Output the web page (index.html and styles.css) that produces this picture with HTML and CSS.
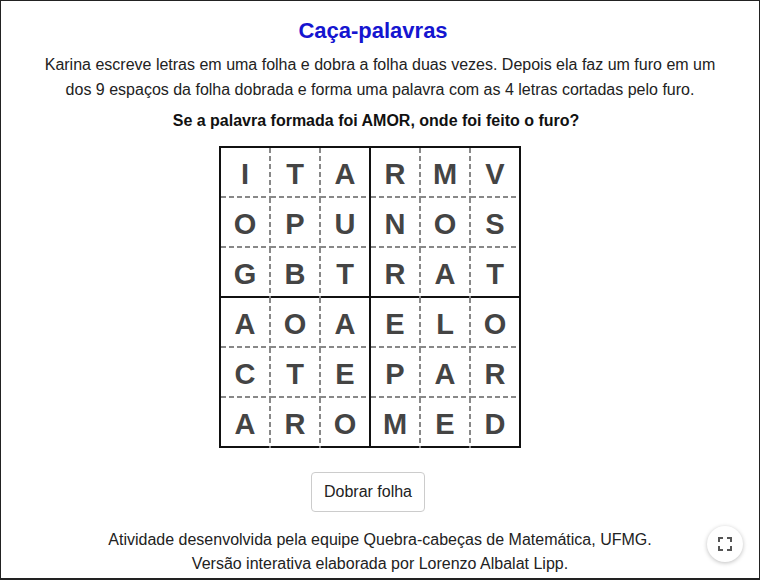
FILE: index.html
```html
<!DOCTYPE html>
<html lang="pt-BR">
<head>
<meta charset="utf-8">
<title>Caça-palavras</title>
<link rel="stylesheet" href="styles.css">
</head>
<body>
<div class="frame">
  <h1 class="title">Caça-palavras</h1>
  <p class="intro">Karina escreve letras em uma folha e dobra a folha duas vezes. Depois ela faz um furo em um<br>dos 9 espaços da folha dobrada e forma uma palavra com as 4 letras cortadas pelo furo.</p>
  <p class="question">Se a palavra formada foi AMOR, onde foi feito o furo?</p>
  <div class="grid">
    <div class="cell">I</div><div class="cell">T</div><div class="cell">A</div><div class="cell">R</div><div class="cell">M</div><div class="cell">V</div>
    <div class="cell">O</div><div class="cell">P</div><div class="cell">U</div><div class="cell">N</div><div class="cell">O</div><div class="cell">S</div>
    <div class="cell">G</div><div class="cell">B</div><div class="cell">T</div><div class="cell">R</div><div class="cell">A</div><div class="cell">T</div>
    <div class="cell">A</div><div class="cell">O</div><div class="cell">A</div><div class="cell">E</div><div class="cell">L</div><div class="cell">O</div>
    <div class="cell">C</div><div class="cell">T</div><div class="cell">E</div><div class="cell">P</div><div class="cell">A</div><div class="cell">R</div>
    <div class="cell">A</div><div class="cell">R</div><div class="cell">O</div><div class="cell">M</div><div class="cell">E</div><div class="cell">D</div>
  </div>
  <button class="fold-btn" type="button">Dobrar folha</button>
  <p class="credits">Atividade desenvolvida pela equipe Quebra-cabeças de Matemática, UFMG.<br>Versão interativa elaborada por Lorenzo Albalat Lipp.</p>
  <button class="fullscreen" type="button" aria-label="Tela cheia">
    <svg width="14" height="14" viewBox="0 0 14 14" fill="none" stroke="#555" stroke-width="2">
      <path d="M1 5V1h4M9 1h4v4M13 9v4H9M5 13H1V9"/>
    </svg>
  </button>
</div>
</body>
</html>
```
FILE: styles.css
```css
* { box-sizing: border-box; }
html, body { margin: 0; padding: 0; }
body {
  font-family: "Liberation Sans", Arial, sans-serif;
  color: #222;
  background: #fff;
}
.frame {
  position: relative;
  width: 760px;
  height: 580px;
  border: 1px solid #222;
  border-bottom-width: 2px;
  display: flex;
  flex-direction: column;
  align-items: center;
  padding-top: 17px;
}
.title {
  margin: 0 14px 0 0;
  font-size: 22px;
  line-height: 26px;
  font-weight: bold;
  color: #1515d0;
}
.intro {
  margin: 8px 0 0;
  font-size: 16px;
  line-height: 25px;
  text-align: center;
}
.question {
  margin: 9px 8px 0 0;
  font-size: 16px;
  line-height: 20px;
  font-weight: bold;
  color: #111;
}
.grid {
  margin: 15px 20px 0 0;
  display: grid;
  grid-template-columns: repeat(6, 50px);
  grid-template-rows: repeat(6, 50px);
  border-top: 2px solid #111;
  border-left: 2px solid #111;
}
.cell {
  display: flex;
  align-items: center;
  justify-content: center;
  padding: 3px 2px 0 0;
  font-size: 29px;
  font-weight: bold;
  color: #444;
  --vr: repeating-linear-gradient(to bottom, #888 0 5px, transparent 5px 8px);
  --hr: repeating-linear-gradient(to right, #888 0 5px, transparent 5px 8px);
  background-image: var(--vr), var(--hr);
  background-size: 2px 100%, 100% 2px;
  background-position: right top, left bottom;
  background-repeat: no-repeat;
}
.cell:nth-child(6n+3),
.cell:nth-child(6n) {
  --vr: linear-gradient(#111, #111);
}
.cell:nth-child(n+13):nth-child(-n+18),
.cell:nth-child(n+31) {
  --hr: linear-gradient(#111, #111);
}
.fold-btn {
  margin: 24px 24px 0 0;
  height: 40px;
  padding: 0 12px;
  font-family: inherit;
  font-size: 16px;
  color: #222;
  background: #fff;
  border: 1px solid #ccc;
  border-radius: 4px;
}
.credits {
  margin: 16px 0 0;
  font-size: 16px;
  line-height: 24px;
  text-align: center;
}
.fullscreen {
  position: absolute;
  right: 16px;
  bottom: 16px;
  width: 36px;
  height: 36px;
  border: none;
  border-radius: 50%;
  background: #fff;
  box-shadow: 0 1px 4px rgba(0,0,0,0.25);
  display: flex;
  align-items: center;
  justify-content: center;
  padding: 0;
}
```
